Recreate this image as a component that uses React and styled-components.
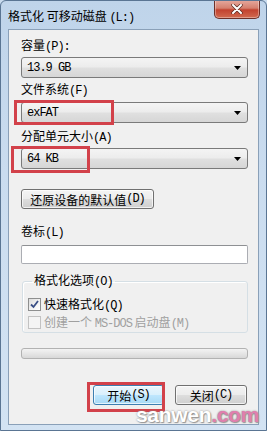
import React from "react";
import styled, { createGlobalStyle } from "styled-components";

const GlobalStyle = createGlobalStyle`
  html, body {
    margin: 0;
    padding: 0;
    background: #c9dbee;
  }
  * {
    box-sizing: border-box;
  }
`;

const CJK = `"Noto Sans CJK SC", "Noto Sans CJK TC", sans-serif`;

const WINDOW = styled.div`
  position: relative;
  width: 267px;
  height: 431px;
  display: flex;
  flex-direction: column;
  padding: 0 7px 5px 7px;
  background: linear-gradient(180deg, #bfd4ea 0%, #cadcef 40%, #d3e3f3 100%);
  border: 1px solid #5a7593;
  border-radius: 6px 6px 0 0;
  font-family: ${CJK};
  font-size: 12px;
  color: #000;
  overflow: hidden;
`;

const TITLEBAR = styled.div`
  height: 28px;
  display: flex;
  align-items: flex-start;
  justify-content: space-between;
`;

const TITLE = styled.div`
  margin-top: 7px;
  line-height: 16px;
  white-space: nowrap;
`;

const CLOSE = styled.div`
  width: 46px;
  height: 19px;
  margin-top: -1px;
  margin-right: -1px;
  display: flex;
  align-items: center;
  justify-content: center;
  border: 1px solid #6d3029;
  border-top: none;
  border-radius: 0 0 5px 5px;
  background: linear-gradient(180deg, #e6aa9f 0%, #d5806f 45%, #c2422f 55%, #d16a50 100%);
  box-shadow: inset 0 0 0 1px rgba(255, 255, 255, 0.35);
`;

const CLIENT = styled.div`
  flex: 1;
  display: flex;
  flex-direction: column;
  padding: 7px 10px 0 12px;
  background: #f0f0f0;
  border: 1px solid #8aa0b8;
`;

const LABEL = styled.div`
  line-height: 16px;
  margin-top: ${p => p.mt || 0}px;
  white-space: nowrap;
  color: ${p => (p.disabled ? "#a0a0a0" : "#000")};
`;

const L = styled.span`
  font-family: "Liberation Mono", monospace;
  font-size: 12px;
  letter-spacing: -1px;
`;

const COMBO = styled.div`
  position: relative;
  height: 21px;
  margin-top: ${p => p.mt || 0}px;
  display: flex;
  align-items: center;
  justify-content: space-between;
  padding: 0 6px 0 5px;
  border: 1px solid #7a7a7a;
  border-radius: 3px;
  background: linear-gradient(180deg, #f4f4f4 0%, #ececec 48%, #e0e0e0 52%, #d6d6d6 100%);
`;

const MARK = styled.div`
  position: absolute;
  top: ${p => p.top}px;
  left: ${p => p.left}px;
  width: ${p => p.w}px;
  height: ${p => p.h}px;
  border: 3px solid #d2414a;
  pointer-events: none;
`;

const BUTTON = styled.div`
  position: relative;
  width: ${p => p.w}px;
  height: 20px;
  margin-top: ${p => p.mt || 0}px;
  display: flex;
  align-items: center;
  justify-content: center;
  border: 1px solid ${p => (p.primary ? "#3c7fb1" : "#707070")};
  border-radius: 3px;
  white-space: nowrap;
  background: ${p =>
    p.primary
      ? "linear-gradient(180deg, #eaf6fd 0%, #d9f0fc 48%, #bee6fd 52%, #a7d9f5 100%)"
      : "linear-gradient(180deg, #f4f4f4 0%, #ececec 48%, #dddddd 52%, #cfcfcf 100%)"};
  box-shadow: inset 0 0 0 1px rgba(255, 255, 255, 0.7);
`;

const FIELD = styled.div`
  height: 19px;
  margin-top: 4px;
  background: #fff;
  border: 1px solid #abadb3;
  border-top-color: #8e9093;
  border-radius: 2px;
`;

const GROUP = styled.fieldset`
  margin: 8px 0 0 1px;
  padding: 5px 0 1px 5px;
  border: 1px solid #d5dfe5;
  border-radius: 3px;
  box-shadow: inset 1px 1px 0 #fff;
`;

const LEGEND = styled.legend`
  padding: 0 2px;
  margin-left: 4px;
  line-height: 16px;
`;

const CHECKROW = styled.div`
  height: 18px;
  display: flex;
  align-items: center;
  gap: 3px;
  white-space: nowrap;
  color: ${p => (p.disabled ? "#a0a0a0" : "#000")};
`;

const BOX = styled.div`
  width: 13px;
  height: 13px;
  display: flex;
  align-items: center;
  justify-content: center;
  border: 1px solid ${p => (p.disabled ? "#c2c2c2" : "#8e8f8f")};
  background: ${p =>
    p.disabled
      ? "#f4f4f4"
      : "linear-gradient(135deg, #dcdcdc 0%, #f4f4f4 60%, #ffffff 100%)"};
`;

const PROGRESS = styled.div`
  height: 11px;
  margin-top: 15px;
  border: 1px solid #b2b2b2;
  border-radius: 3px;
  background: linear-gradient(180deg, #f3f3f3 0%, #e6e6e6 50%, #d8d8d8 100%);
`;

const ACTIONS = styled.div`
  display: flex;
  justify-content: flex-end;
  gap: 11px;
  margin-top: 26px;
  padding-right: 1px;
`;

const WATERMARK = styled.div`
  position: absolute;
  right: 7px;
  bottom: 5px;
  font-family: "Liberation Sans", sans-serif;
  font-weight: bold;
  font-size: 21px;
  line-height: 20px;
  letter-spacing: -0.3px;
  color: #fff;
  text-shadow: 0 0 2px #8a8a8a, 1px 1px 1px #9a9a9a;
  & span {
    color: #e07fae;
  }
`;

const Arrow = () => (
  <svg width="7" height="4" viewBox="0 0 7 4">
    <path d="M0 0 H7 L3.5 4 Z" fill="#000" />
  </svg>
);

const Combo = ({ children, mt, mark }) => (
  <COMBO mt={mt}>
    <L>{children}</L>
    <Arrow />
    {mark && <MARK {...mark} />}
  </COMBO>
);

const Check = ({ checked, disabled, children }) => (
  <CHECKROW disabled={disabled}>
    <BOX disabled={disabled}>
      {checked && (
        <svg width="9" height="9" viewBox="0 0 9 9">
          <path d="M1 4.5 L3.5 7 L8 1" fill="none" stroke="#3a4f86" strokeWidth="1.8" />
        </svg>
      )}
    </BOX>
    {children}
  </CHECKROW>
);

const App = () => {
  return (
    <>
      <GlobalStyle />
      <WINDOW>
        <TITLEBAR>
          <TITLE>
            格式化 可移动磁盘 <L>(L:)</L>
          </TITLE>
          <CLOSE>
            <svg width="12" height="10" viewBox="0 0 12 10">
              <path d="M2 1 L10 9 M10 1 L2 9" stroke="#5a2a22" strokeWidth="3.4" strokeLinecap="round" />
              <path d="M2 1 L10 9 M10 1 L2 9" stroke="#fff" strokeWidth="2" strokeLinecap="round" />
            </svg>
          </CLOSE>
        </TITLEBAR>
        <CLIENT>
          <LABEL>
            容量<L>(P):</L>
          </LABEL>
          <Combo mt={2}>13.9 GB</Combo>
          <LABEL mt={3}>
            文件系统<L>(F)</L>
          </LABEL>
          <Combo mt={3} mark={{ top: -3, left: -8, w: 100, h: 25 }}>
            exFAT
          </Combo>
          <LABEL mt={5}>
            分配单元大小<L>(A)</L>
          </LABEL>
          <Combo mt={2} mark={{ top: -3, left: -11, w: 79, h: 27 }}>
            64 KB
          </Combo>
          <BUTTON w={133} mt={20}>
            还原设备的默认值<L>(D)</L>
          </BUTTON>
          <LABEL mt={14}>
            卷标<L>(L)</L>
          </LABEL>
          <FIELD />
          <GROUP>
            <LEGEND>
              格式化选项<L>(O)</L>
            </LEGEND>
            <Check checked>
              <span>
                快速格式化<L>(Q)</L>
              </span>
            </Check>
            <Check disabled>
              <span>
                创建一个 <L>MS-DOS</L> 启动盘<L>(M)</L>
              </span>
            </Check>
          </GROUP>
          <PROGRESS />
          <ACTIONS>
            <BUTTON w={71} primary>
              开始<L>(S)</L>
              <MARK top={-4} left={-7} w={78} h={30} />
            </BUTTON>
            <BUTTON w={72}>
              关闭<L>(C)</L>
            </BUTTON>
          </ACTIONS>
        </CLIENT>
        <WATERMARK>
          sanwen<span>.com</span>
        </WATERMARK>
      </WINDOW>
    </>
  );
};

export default App;
